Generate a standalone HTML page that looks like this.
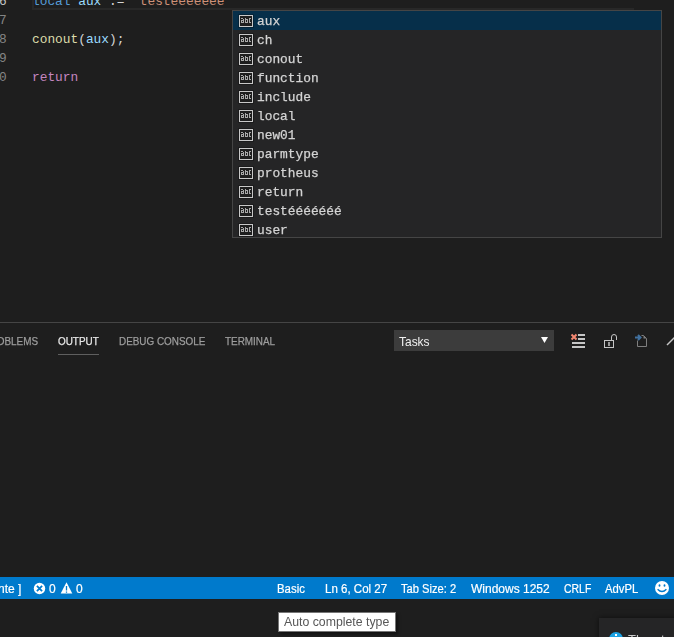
<!DOCTYPE html>
<html><head><meta charset="utf-8">
<style>
*{margin:0;padding:0;box-sizing:border-box}
html,body{width:674px;height:637px;overflow:hidden;background:#1e1e1e}
body{position:relative;font-family:"Liberation Sans",sans-serif}
.mono{font-family:"Liberation Mono",monospace;font-size:12.83px;white-space:pre}
.ln{position:absolute;height:19px;line-height:21px}
.num{position:absolute;color:#858585}
.kw{color:#569cd6}.var{color:#9cdcfe}.op{color:#d4d4d4}.str{color:#ce9178}.fn{color:#dcdcaa}.ctl{color:#c586c0}
#curline{position:absolute;left:32px;top:-9px;width:602px;height:19px;border:2px solid #282828;border-right:0}
#suggest{will-change:transform;position:absolute;left:232px;top:10px;width:430px;height:228px;background:#252526;border:1px solid #454545;overflow:hidden}
.row{position:absolute;left:0;width:428px;height:19px;line-height:21px;color:#d4d4d4;-webkit-text-stroke:0.25px #d4d4d4}
.row.sel{background:#062f4a}
.ico{position:absolute;left:5px;top:3px}
.row .t{position:absolute;left:24px;top:0}
#panel{will-change:transform;position:absolute;left:0;top:322px;width:674px;height:255px;border-top:1px solid #454545;background:#1e1e1e}
.tab{position:absolute;top:13px;font-size:11px;line-height:11px;color:#9d9d9d;-webkit-text-stroke:0.25px currentColor;white-space:pre;transform-origin:0 0}
#status{will-change:transform;position:absolute;left:0;top:577px;width:674px;height:22px;background:#007acc;color:#fff;font-size:12px;line-height:24px;white-space:pre;-webkit-text-stroke:0.2px #fff}
#status span{position:absolute;top:0}
#tooltip{position:absolute;left:278px;top:612px;width:118px;height:20px;background:#fff;border:1px solid #767676;color:#575757;font-size:12.3px;line-height:19px;padding-left:5px;white-space:pre;box-shadow:2px 2px 3px rgba(0,0,0,.45)}
#toast{position:absolute;left:599px;top:618px;width:90px;height:40px;background:#252526;box-shadow:0 0 6px rgba(0,0,0,.6)}
</style></head><body>

<div id="curline"></div>
<div class="mono">
<div class="ln" style="top:-9px;left:-1px"><span class="num" style="color:#c6c6c6">6</span></div>
<div class="ln" style="top:10px;left:-1px"><span class="num">7</span></div>
<div class="ln" style="top:29px;left:-1px"><span class="num">8</span></div>
<div class="ln" style="top:48px;left:-1px"><span class="num">9</span></div>
<div class="ln" style="top:67px;left:-1px"><span class="num">0</span></div>
<div class="ln" style="top:-9px;left:32px"><span class="kw">local</span> <span class="var">aux</span> <span class="op">:=</span> <span class="str">"testééééééé"</span></div>
<div class="ln" style="top:29px;left:32px"><span class="fn">conout</span><span class="op">(</span><span class="var">aux</span><span class="op">);</span></div>
<div class="ln" style="top:67px;left:32px"><span class="ctl">return</span></div>
</div>

<div id="suggest" class="mono">
<div class="row sel" style="top:0px"><svg class="ico" width="16" height="14" viewBox="-1 -1 16 14"><rect x="-0.5" y="-0.5" width="15" height="13" fill="none" stroke="rgba(0,0,0,.25)"/><rect x="0.5" y="0.5" width="13" height="11" fill="#1e1e1e" stroke="#c8c8c8"/><path fill="#a8a8a8" d="M2 3h1v1h-1zM3 3h1v1h-1zM4 4h1v1h-1zM2 5h1v1h-1zM3 5h1v1h-1zM4 5h1v1h-1zM2 6h1v1h-1zM4 6h1v1h-1zM2 7h1v1h-1zM3 7h1v1h-1zM4 7h1v1h-1zM6 3h1v1h-1zM6 4h1v1h-1zM7 4h1v1h-1zM8 4h1v1h-1zM6 5h1v1h-1zM8 5h1v1h-1zM6 6h1v1h-1zM8 6h1v1h-1zM6 7h1v1h-1zM7 7h1v1h-1zM8 7h1v1h-1zM10 3h1v1h-1zM11 3h1v1h-1zM10 4h1v1h-1zM10 5h1v1h-1zM10 6h1v1h-1zM10 7h1v1h-1zM11 7h1v1h-1z"/></svg><span class="t">aux</span></div>
<div class="row" style="top:19px"><svg class="ico" width="16" height="14" viewBox="-1 -1 16 14"><rect x="-0.5" y="-0.5" width="15" height="13" fill="none" stroke="rgba(0,0,0,.25)"/><rect x="0.5" y="0.5" width="13" height="11" fill="#1e1e1e" stroke="#c8c8c8"/><path fill="#a8a8a8" d="M2 3h1v1h-1zM3 3h1v1h-1zM4 4h1v1h-1zM2 5h1v1h-1zM3 5h1v1h-1zM4 5h1v1h-1zM2 6h1v1h-1zM4 6h1v1h-1zM2 7h1v1h-1zM3 7h1v1h-1zM4 7h1v1h-1zM6 3h1v1h-1zM6 4h1v1h-1zM7 4h1v1h-1zM8 4h1v1h-1zM6 5h1v1h-1zM8 5h1v1h-1zM6 6h1v1h-1zM8 6h1v1h-1zM6 7h1v1h-1zM7 7h1v1h-1zM8 7h1v1h-1zM10 3h1v1h-1zM11 3h1v1h-1zM10 4h1v1h-1zM10 5h1v1h-1zM10 6h1v1h-1zM10 7h1v1h-1zM11 7h1v1h-1z"/></svg><span class="t">ch</span></div>
<div class="row" style="top:38px"><svg class="ico" width="16" height="14" viewBox="-1 -1 16 14"><rect x="-0.5" y="-0.5" width="15" height="13" fill="none" stroke="rgba(0,0,0,.25)"/><rect x="0.5" y="0.5" width="13" height="11" fill="#1e1e1e" stroke="#c8c8c8"/><path fill="#a8a8a8" d="M2 3h1v1h-1zM3 3h1v1h-1zM4 4h1v1h-1zM2 5h1v1h-1zM3 5h1v1h-1zM4 5h1v1h-1zM2 6h1v1h-1zM4 6h1v1h-1zM2 7h1v1h-1zM3 7h1v1h-1zM4 7h1v1h-1zM6 3h1v1h-1zM6 4h1v1h-1zM7 4h1v1h-1zM8 4h1v1h-1zM6 5h1v1h-1zM8 5h1v1h-1zM6 6h1v1h-1zM8 6h1v1h-1zM6 7h1v1h-1zM7 7h1v1h-1zM8 7h1v1h-1zM10 3h1v1h-1zM11 3h1v1h-1zM10 4h1v1h-1zM10 5h1v1h-1zM10 6h1v1h-1zM10 7h1v1h-1zM11 7h1v1h-1z"/></svg><span class="t">conout</span></div>
<div class="row" style="top:57px"><svg class="ico" width="16" height="14" viewBox="-1 -1 16 14"><rect x="-0.5" y="-0.5" width="15" height="13" fill="none" stroke="rgba(0,0,0,.25)"/><rect x="0.5" y="0.5" width="13" height="11" fill="#1e1e1e" stroke="#c8c8c8"/><path fill="#a8a8a8" d="M2 3h1v1h-1zM3 3h1v1h-1zM4 4h1v1h-1zM2 5h1v1h-1zM3 5h1v1h-1zM4 5h1v1h-1zM2 6h1v1h-1zM4 6h1v1h-1zM2 7h1v1h-1zM3 7h1v1h-1zM4 7h1v1h-1zM6 3h1v1h-1zM6 4h1v1h-1zM7 4h1v1h-1zM8 4h1v1h-1zM6 5h1v1h-1zM8 5h1v1h-1zM6 6h1v1h-1zM8 6h1v1h-1zM6 7h1v1h-1zM7 7h1v1h-1zM8 7h1v1h-1zM10 3h1v1h-1zM11 3h1v1h-1zM10 4h1v1h-1zM10 5h1v1h-1zM10 6h1v1h-1zM10 7h1v1h-1zM11 7h1v1h-1z"/></svg><span class="t">function</span></div>
<div class="row" style="top:76px"><svg class="ico" width="16" height="14" viewBox="-1 -1 16 14"><rect x="-0.5" y="-0.5" width="15" height="13" fill="none" stroke="rgba(0,0,0,.25)"/><rect x="0.5" y="0.5" width="13" height="11" fill="#1e1e1e" stroke="#c8c8c8"/><path fill="#a8a8a8" d="M2 3h1v1h-1zM3 3h1v1h-1zM4 4h1v1h-1zM2 5h1v1h-1zM3 5h1v1h-1zM4 5h1v1h-1zM2 6h1v1h-1zM4 6h1v1h-1zM2 7h1v1h-1zM3 7h1v1h-1zM4 7h1v1h-1zM6 3h1v1h-1zM6 4h1v1h-1zM7 4h1v1h-1zM8 4h1v1h-1zM6 5h1v1h-1zM8 5h1v1h-1zM6 6h1v1h-1zM8 6h1v1h-1zM6 7h1v1h-1zM7 7h1v1h-1zM8 7h1v1h-1zM10 3h1v1h-1zM11 3h1v1h-1zM10 4h1v1h-1zM10 5h1v1h-1zM10 6h1v1h-1zM10 7h1v1h-1zM11 7h1v1h-1z"/></svg><span class="t">include</span></div>
<div class="row" style="top:95px"><svg class="ico" width="16" height="14" viewBox="-1 -1 16 14"><rect x="-0.5" y="-0.5" width="15" height="13" fill="none" stroke="rgba(0,0,0,.25)"/><rect x="0.5" y="0.5" width="13" height="11" fill="#1e1e1e" stroke="#c8c8c8"/><path fill="#a8a8a8" d="M2 3h1v1h-1zM3 3h1v1h-1zM4 4h1v1h-1zM2 5h1v1h-1zM3 5h1v1h-1zM4 5h1v1h-1zM2 6h1v1h-1zM4 6h1v1h-1zM2 7h1v1h-1zM3 7h1v1h-1zM4 7h1v1h-1zM6 3h1v1h-1zM6 4h1v1h-1zM7 4h1v1h-1zM8 4h1v1h-1zM6 5h1v1h-1zM8 5h1v1h-1zM6 6h1v1h-1zM8 6h1v1h-1zM6 7h1v1h-1zM7 7h1v1h-1zM8 7h1v1h-1zM10 3h1v1h-1zM11 3h1v1h-1zM10 4h1v1h-1zM10 5h1v1h-1zM10 6h1v1h-1zM10 7h1v1h-1zM11 7h1v1h-1z"/></svg><span class="t">local</span></div>
<div class="row" style="top:114px"><svg class="ico" width="16" height="14" viewBox="-1 -1 16 14"><rect x="-0.5" y="-0.5" width="15" height="13" fill="none" stroke="rgba(0,0,0,.25)"/><rect x="0.5" y="0.5" width="13" height="11" fill="#1e1e1e" stroke="#c8c8c8"/><path fill="#a8a8a8" d="M2 3h1v1h-1zM3 3h1v1h-1zM4 4h1v1h-1zM2 5h1v1h-1zM3 5h1v1h-1zM4 5h1v1h-1zM2 6h1v1h-1zM4 6h1v1h-1zM2 7h1v1h-1zM3 7h1v1h-1zM4 7h1v1h-1zM6 3h1v1h-1zM6 4h1v1h-1zM7 4h1v1h-1zM8 4h1v1h-1zM6 5h1v1h-1zM8 5h1v1h-1zM6 6h1v1h-1zM8 6h1v1h-1zM6 7h1v1h-1zM7 7h1v1h-1zM8 7h1v1h-1zM10 3h1v1h-1zM11 3h1v1h-1zM10 4h1v1h-1zM10 5h1v1h-1zM10 6h1v1h-1zM10 7h1v1h-1zM11 7h1v1h-1z"/></svg><span class="t">new01</span></div>
<div class="row" style="top:133px"><svg class="ico" width="16" height="14" viewBox="-1 -1 16 14"><rect x="-0.5" y="-0.5" width="15" height="13" fill="none" stroke="rgba(0,0,0,.25)"/><rect x="0.5" y="0.5" width="13" height="11" fill="#1e1e1e" stroke="#c8c8c8"/><path fill="#a8a8a8" d="M2 3h1v1h-1zM3 3h1v1h-1zM4 4h1v1h-1zM2 5h1v1h-1zM3 5h1v1h-1zM4 5h1v1h-1zM2 6h1v1h-1zM4 6h1v1h-1zM2 7h1v1h-1zM3 7h1v1h-1zM4 7h1v1h-1zM6 3h1v1h-1zM6 4h1v1h-1zM7 4h1v1h-1zM8 4h1v1h-1zM6 5h1v1h-1zM8 5h1v1h-1zM6 6h1v1h-1zM8 6h1v1h-1zM6 7h1v1h-1zM7 7h1v1h-1zM8 7h1v1h-1zM10 3h1v1h-1zM11 3h1v1h-1zM10 4h1v1h-1zM10 5h1v1h-1zM10 6h1v1h-1zM10 7h1v1h-1zM11 7h1v1h-1z"/></svg><span class="t">parmtype</span></div>
<div class="row" style="top:152px"><svg class="ico" width="16" height="14" viewBox="-1 -1 16 14"><rect x="-0.5" y="-0.5" width="15" height="13" fill="none" stroke="rgba(0,0,0,.25)"/><rect x="0.5" y="0.5" width="13" height="11" fill="#1e1e1e" stroke="#c8c8c8"/><path fill="#a8a8a8" d="M2 3h1v1h-1zM3 3h1v1h-1zM4 4h1v1h-1zM2 5h1v1h-1zM3 5h1v1h-1zM4 5h1v1h-1zM2 6h1v1h-1zM4 6h1v1h-1zM2 7h1v1h-1zM3 7h1v1h-1zM4 7h1v1h-1zM6 3h1v1h-1zM6 4h1v1h-1zM7 4h1v1h-1zM8 4h1v1h-1zM6 5h1v1h-1zM8 5h1v1h-1zM6 6h1v1h-1zM8 6h1v1h-1zM6 7h1v1h-1zM7 7h1v1h-1zM8 7h1v1h-1zM10 3h1v1h-1zM11 3h1v1h-1zM10 4h1v1h-1zM10 5h1v1h-1zM10 6h1v1h-1zM10 7h1v1h-1zM11 7h1v1h-1z"/></svg><span class="t">protheus</span></div>
<div class="row" style="top:171px"><svg class="ico" width="16" height="14" viewBox="-1 -1 16 14"><rect x="-0.5" y="-0.5" width="15" height="13" fill="none" stroke="rgba(0,0,0,.25)"/><rect x="0.5" y="0.5" width="13" height="11" fill="#1e1e1e" stroke="#c8c8c8"/><path fill="#a8a8a8" d="M2 3h1v1h-1zM3 3h1v1h-1zM4 4h1v1h-1zM2 5h1v1h-1zM3 5h1v1h-1zM4 5h1v1h-1zM2 6h1v1h-1zM4 6h1v1h-1zM2 7h1v1h-1zM3 7h1v1h-1zM4 7h1v1h-1zM6 3h1v1h-1zM6 4h1v1h-1zM7 4h1v1h-1zM8 4h1v1h-1zM6 5h1v1h-1zM8 5h1v1h-1zM6 6h1v1h-1zM8 6h1v1h-1zM6 7h1v1h-1zM7 7h1v1h-1zM8 7h1v1h-1zM10 3h1v1h-1zM11 3h1v1h-1zM10 4h1v1h-1zM10 5h1v1h-1zM10 6h1v1h-1zM10 7h1v1h-1zM11 7h1v1h-1z"/></svg><span class="t">return</span></div>
<div class="row" style="top:190px"><svg class="ico" width="16" height="14" viewBox="-1 -1 16 14"><rect x="-0.5" y="-0.5" width="15" height="13" fill="none" stroke="rgba(0,0,0,.25)"/><rect x="0.5" y="0.5" width="13" height="11" fill="#1e1e1e" stroke="#c8c8c8"/><path fill="#a8a8a8" d="M2 3h1v1h-1zM3 3h1v1h-1zM4 4h1v1h-1zM2 5h1v1h-1zM3 5h1v1h-1zM4 5h1v1h-1zM2 6h1v1h-1zM4 6h1v1h-1zM2 7h1v1h-1zM3 7h1v1h-1zM4 7h1v1h-1zM6 3h1v1h-1zM6 4h1v1h-1zM7 4h1v1h-1zM8 4h1v1h-1zM6 5h1v1h-1zM8 5h1v1h-1zM6 6h1v1h-1zM8 6h1v1h-1zM6 7h1v1h-1zM7 7h1v1h-1zM8 7h1v1h-1zM10 3h1v1h-1zM11 3h1v1h-1zM10 4h1v1h-1zM10 5h1v1h-1zM10 6h1v1h-1zM10 7h1v1h-1zM11 7h1v1h-1z"/></svg><span class="t">testééééééé</span></div>
<div class="row" style="top:209px"><svg class="ico" width="16" height="14" viewBox="-1 -1 16 14"><rect x="-0.5" y="-0.5" width="15" height="13" fill="none" stroke="rgba(0,0,0,.25)"/><rect x="0.5" y="0.5" width="13" height="11" fill="#1e1e1e" stroke="#c8c8c8"/><path fill="#a8a8a8" d="M2 3h1v1h-1zM3 3h1v1h-1zM4 4h1v1h-1zM2 5h1v1h-1zM3 5h1v1h-1zM4 5h1v1h-1zM2 6h1v1h-1zM4 6h1v1h-1zM2 7h1v1h-1zM3 7h1v1h-1zM4 7h1v1h-1zM6 3h1v1h-1zM6 4h1v1h-1zM7 4h1v1h-1zM8 4h1v1h-1zM6 5h1v1h-1zM8 5h1v1h-1zM6 6h1v1h-1zM8 6h1v1h-1zM6 7h1v1h-1zM7 7h1v1h-1zM8 7h1v1h-1zM10 3h1v1h-1zM11 3h1v1h-1zM10 4h1v1h-1zM10 5h1v1h-1zM10 6h1v1h-1zM10 7h1v1h-1zM11 7h1v1h-1z"/></svg><span class="t">user</span></div>
</div>

<div id="panel">
  <span class="tab" style="left:-17px;transform:scaleX(.9)">PROBLEMS</span>
  <span class="tab" style="left:58px;color:#e7e7e7;transform:scaleX(.9)">OUTPUT</span>
  <div style="position:absolute;left:58px;top:31px;width:41px;height:1px;background:#5f5f5f"></div>
  <span class="tab" style="left:119px;transform:scaleX(.9)">DEBUG CONSOLE</span>
  <span class="tab" style="left:225px;transform:scaleX(.9)">TERMINAL</span>
  <div style="position:absolute;left:394px;top:7px;width:160px;height:21px;background:#3c3c3c;color:#f0f0f0;font-size:13px;line-height:23px;padding-left:5px"><span style="display:inline-block;transform:scaleX(.92);transform-origin:0 0">Tasks</span></div>
  <svg style="position:absolute;left:541px;top:14px" width="7" height="6"><path d="M0 0H7L3.5 6Z" fill="#fff"/></svg>
  <svg style="position:absolute;left:565px;top:4px" width="110" height="26" viewBox="565 327 110 26">
    <path d="M571.5 334.5L576.5 339.5M576.5 334.5L571.5 339.5" stroke="#f48771" stroke-width="2"/>
    <path d="M578 335h7M578 339h7M572 343h13M572 347h13" stroke="#c5c5c5" stroke-width="2"/>
    <rect x="604.5" y="340.5" width="9" height="7" fill="none" stroke="#c5c5c5"/>
    <rect x="608" y="342" width="2" height="4" fill="#999"/>
    <path d="M611.5 340V337a2.5 2.5 0 0 1 5 0V340" fill="none" stroke="#c5c5c5"/>
    <path d="M637.5 340.5v6h9v-8l-3-3h-2" fill="none" stroke="#7f7f7f"/>
    <path d="M643.5 335.5v3h3z" fill="#7f7f7f"/>
    <path d="M635 337.5h5M638 335l2.5 2.5L638 340" fill="none" stroke="#41719f" stroke-width="2"/>
    <path d="M667 345L675 337" stroke="#c5c5c5" stroke-width="1.5"/>
  </svg>
</div>

<div id="status">
  <span style="left:-2px">nte ]</span>
  <svg style="position:absolute;left:33px;top:5px" width="13" height="13" viewBox="0 0 13 13"><circle cx="6.5" cy="6.5" r="5.7" fill="#fff"/><path d="M3.9 3.9L9.1 9.1M9.1 3.9L3.9 9.1" stroke="#007acc" stroke-width="1.8"/></svg>
  <span style="left:49px">0</span>
  <svg style="position:absolute;left:60px;top:5px" width="13" height="12" viewBox="0 0 13 12"><path d="M6.5 0.2L12.3 11.5H0.7Z" fill="#fff"/><path d="M6.5 4v4.5M6.5 9.5v1.3" stroke="#007acc" stroke-width="1.3"/></svg>
  <span style="left:76px">0</span>
  <span style="left:277px;transform:scaleX(.95);transform-origin:0 0">Basic</span>
  <span style="left:325px;transform:scaleX(.96);transform-origin:0 0">Ln 6, Col 27</span>
  <span style="left:401px;transform:scaleX(.93);transform-origin:0 0">Tab Size: 2</span>
  <span style="left:471px">Windows 1252</span>
  <span style="left:564px;transform:scaleX(.87);transform-origin:0 0">CRLF</span>
  <span style="left:605px;transform:scaleX(.94);transform-origin:0 0">AdvPL</span>
  <svg style="position:absolute;left:654px;top:4px" width="16" height="16" viewBox="0 0 16 16"><circle cx="8" cy="7" r="7" fill="#fff"/><ellipse cx="5.5" cy="4.5" rx="0.9" ry="1.3" fill="#007acc"/><ellipse cx="10.5" cy="4.5" rx="0.9" ry="1.3" fill="#007acc"/><path d="M3.6 8.2Q8 12.8 12.4 8.2" fill="none" stroke="#007acc" stroke-width="1.3"/></svg>
</div>
<div id="tooltip">Auto complete type</div>
<div id="toast">
  <svg style="position:absolute;left:9px;top:13px" width="16" height="16" viewBox="0 0 16 16"><circle cx="8" cy="8" r="7" fill="#1ba1e2"/><rect x="7" y="3" width="2" height="2" fill="#fff"/></svg>
  <span style="position:absolute;left:29px;top:14px;line-height:15px;color:#cccccc;font-size:13px;white-space:pre">Th</span>
  <span style="position:absolute;left:62px;top:14px;line-height:15px;color:#cccccc;font-size:13px;white-space:pre">t</span>
</div>
</body></html>
